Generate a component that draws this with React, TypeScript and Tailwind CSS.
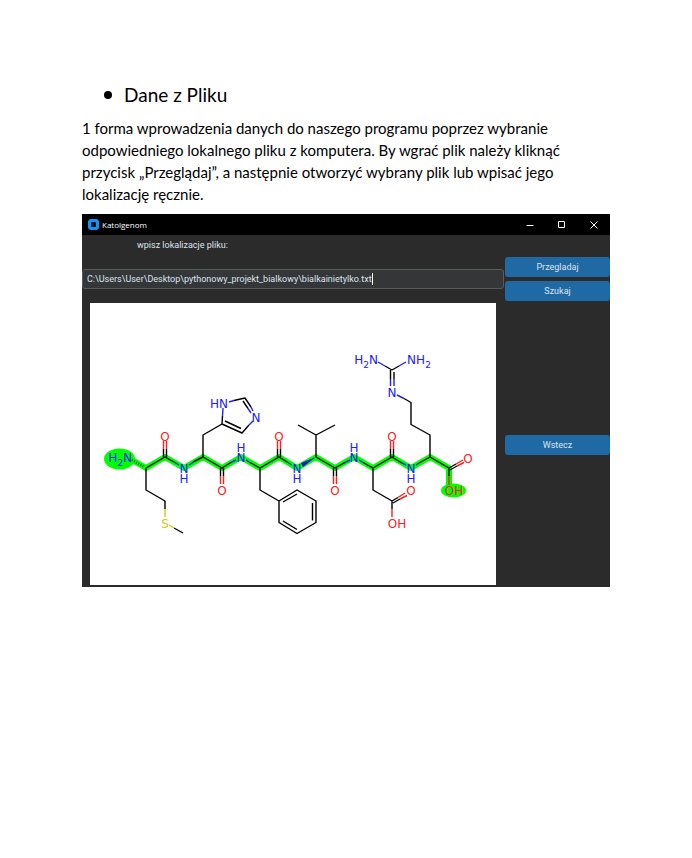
import { useState } from 'react';

type Point = [number, number];

const CARBON = '#000000';
const NITROGEN = '#2020ff';
const OXYGEN = '#ff2020';
const SULFUR = '#cccc20';

const backbone: Point[] = [
  [127, 457], [146, 468], [165, 457], [184, 468], [203, 457], [222, 468],
  [241, 457], [260, 468], [279, 457], [297, 468], [316, 457], [335, 468],
  [354, 457], [373, 468], [392, 457], [411, 468], [430, 457], [449, 468], [449, 490],
];

const bonds: { color: string; d: string }[] = [
  {
    color: CARBON,
    d: [
      'M146 468L165 457L174 462M193 462L203 457L222 468L231 462.5',
      'M250 462.5L260 468L279 457L288 462.5M316 457L335 468L345 462.5',
      'M363 462.5L373 468L392 457L401 462.5M420 462.5L430 457L449 468L456 464M450 470L457 466',
      'M146 468V490L165 501V509M174 528L183 533',
      'M203 457V435L222 424L242 433L249 425M225 421L241 428.5M222 424L222.5 416M234 400.5L245 398L251 407M243 401L248 408.5',
      'M260 468V490L279 501L297 490L316 501V522.5L297 533.5L279 522.5V501M283 502L297 494M312.5 503V520.5M297 529.5L283 521',
      'M316 457V435L298 425M316 435L335 425',
      'M373 468V490L392 501L398 497.5M393 503L400 499M392 501V509',
      'M430 457V435L411 424.5V402.5L404 398.5M392 370L385 366M392 370L399 366M390.5 370V379M394 372V379',
      'M163.5 457V449M166.5 457V449M220.5 468V476M223.5 468V476M277.5 457V449M280.5 457V449',
      'M333.5 468V476M336.5 468V476M390.5 457V449M393.5 457V449M449 468V476',
    ].join(''),
  },
  {
    color: NITROGEN,
    d: 'M174 462L179 465M189 465L193 462.5M231 462.5L236 460M246 460L250 462.5M288 462.5L292 465M345 462.5L350 460M359 460L363 462.5M401 462.5L406 465M416 465L420 462.5M222.5 416L223 408M229 402L234 400.5M251 407L253 411M248 408.5L251 413M249 425L253 421M404 398.5L397 395M385 366L378 362M399 366L406 362M390.5 379V386M394 379V386',
  },
  {
    color: OXYGEN,
    d: 'M163.5 449V441M166.5 449V441M220.5 476V484M223.5 476V484M277.5 449V441M280.5 449V441M333.5 476V484M336.5 476V484M390.5 449V441M393.5 449V441M449 476V485M456 464L463 460M457 466L464 462.5M398 497.5L405 493M400 499L407 495.5M392 509V517',
  },
  { color: SULFUR, d: 'M165 509V517M169 525L174 528' },
];

// "hydrogen" is the vertical distance from the atom to the H drawn above or below it.
const atoms: { text: string; x: number; y: number; color: string; hydrogen?: number }[] = [
  { text: 'O', x: 165, y: 436, color: OXYGEN },
  { text: 'N', x: 184, y: 468, color: NITROGEN, hydrogen: 10 },
  { text: 'O', x: 222, y: 490, color: OXYGEN },
  { text: 'HN', x: 219, y: 403, color: NITROGEN },
  { text: 'N', x: 256, y: 417, color: NITROGEN },
  { text: 'N', x: 241, y: 457, color: NITROGEN, hydrogen: -10 },
  { text: 'O', x: 279, y: 436, color: OXYGEN },
  { text: 'N', x: 297, y: 468, color: NITROGEN, hydrogen: 10 },
  { text: 'O', x: 335, y: 490, color: OXYGEN },
  { text: 'N', x: 354, y: 457, color: NITROGEN, hydrogen: -10 },
  { text: 'O', x: 392, y: 436, color: OXYGEN },
  { text: 'N', x: 411, y: 468, color: NITROGEN, hydrogen: 10 },
  { text: 'O', x: 468, y: 458, color: OXYGEN },
  { text: 'OH', x: 454, y: 490, color: OXYGEN },
  { text: 'O', x: 411, y: 490, color: OXYGEN },
  { text: 'OH', x: 397, y: 523, color: OXYGEN },
  { text: 'S', x: 165, y: 523, color: SULFUR },
  { text: 'N', x: 392, y: 392, color: NITROGEN },
  { text: 'NH', x: 416, y: 359, color: NITROGEN },
];

const aminos: Point[] = [[120, 457], [366, 359]];

function Molecule() {
  return (
    <svg
      viewBox="90 303 406 282"
      className="block w-full bg-white font-['DejaVu_Sans',sans-serif]"
      role="img"
      aria-label="Peptyd"
    >
      <ellipse cx="119.5" cy="459" rx="15.5" ry="10.5" fill="#00ff00" />
      <ellipse cx="453.5" cy="490.5" rx="12.5" ry="7" fill="#00ff00" />
      <polyline
        points={backbone.map((p) => p.join(',')).join(' ')}
        fill="none"
        stroke="#00ff00"
        strokeWidth="6"
        strokeLinecap="round"
        strokeLinejoin="round"
      />
      {bonds.map((b) => (
        <path key={b.color} d={b.d} fill="none" stroke={b.color} strokeWidth="1.4" strokeLinejoin="round" />
      ))}
      <path d="M132 460L144 467" stroke="#104f46" strokeWidth="2.4" strokeDasharray="0.9 1.5" />
      <path d="M316 457L301 463L303 467Z" fill="#1818d0" />
      {atoms.map((a) => (
        <text key={`${a.x}-${a.y}`} x={a.x} y={a.y + 5} fill={a.color} fontSize="12" textAnchor="middle">
          {a.text}
          {a.hydrogen && (
            <tspan x={a.x} dy={a.hydrogen}>
              H
            </tspan>
          )}
        </text>
      ))}
      {aminos.map(([x, y]) => (
        <text key={x} x={x} y={y + 5} fill={NITROGEN} fontSize="12" textAnchor="middle">
          H<tspan dy="4" fontSize="9">2</tspan><tspan dy="-4">N</tspan>
        </text>
      ))}
      <text x="428" y="368" fill={NITROGEN} fontSize="9" textAnchor="middle">
        2
      </text>
    </svg>
  );
}

const actionClass = 'block h-5 w-full rounded-[3px] bg-[#1f6aa5] text-[9px] leading-5 text-[#dce4ee]';

export default function App() {
  const [path, setPath] = useState('C:\\Users\\User\\Desktop\\pythonowy_projekt_bialkowy\\bialkainietylko.txt');

  return (
    <main className="min-h-screen bg-white px-[82px] pt-[81px] text-black">
      <ul className="list-none font-[Lato,sans-serif] text-[19px] leading-7">
        <li className="flex items-center gap-3 pl-[22px]">
          <span className="size-2 rounded-full bg-black" />
          <h1>Dane z Pliku</h1>
        </li>
      </ul>
      <p className="mt-2 font-[Lato,sans-serif] text-[15px] leading-[22px]">
        1 forma wprowadzenia danych do naszego programu poprzez wybranie
        <br />
        odpowiedniego lokalnego pliku z komputera. By wgrać plik należy kliknąć
        <br />
        przycisk „Przeglądaj”, a następnie otworzyć wybrany plik lub wpisać jego
        <br />
        lokalizację ręcznie.
      </p>

      <section className="mt-[9px] bg-[#2b2b2b] font-[Roboto,sans-serif] text-[9px] text-[#dce4ee]">
        <header className="flex h-[21px] items-center bg-black pl-[6px] pr-3 text-white">
          <svg viewBox="0 0 11 11" className="size-[11px]" aria-hidden="true">
            <path d="M2 0H9L11 2V9L9 11H2L0 9V2Z" fill="#0d94f5" />
            <rect x="3" y="3" width="5" height="5" rx="1" fill="#06121f" />
          </svg>
          <h2 className="ml-[3px] flex-1 font-['Open_Sans',sans-serif] text-[8px]">Katolgenom</h2>
          <div className="flex items-center gap-6">
            <button type="button" aria-label="Minimalizuj">
              <svg viewBox="0 0 8 8" className="size-2"><path d="M0.5 4.5H7.5" stroke="white" /></svg>
            </button>
            <button type="button" aria-label="Maksymalizuj">
              <svg viewBox="0 0 8 8" className="size-2"><path d="M0.5 0.5H6.5V6.5H0.5Z" fill="none" stroke="white" /></svg>
            </button>
            <button type="button" aria-label="Zamknij">
              <svg viewBox="0 0 8 8" className="size-2"><path d="M0.5 0.5L7.5 7.5M7.5 0.5L0.5 7.5" stroke="white" /></svg>
            </button>
          </div>
        </header>

        <div className="flex gap-px pb-0.5">
          <div className="min-w-0 flex-1">
            <label htmlFor="path" className="block pl-[55px] pt-0.5 leading-4">
              wpisz lokalizacje pliku:
            </label>
            <div className="mt-4 flex h-5 items-center rounded-[3px] border border-[#565b5e] bg-[#343638] px-1">
              <input
                id="path"
                value={path}
                onChange={(e) => setPath(e.target.value)}
                className="field-sizing-content max-w-full bg-transparent text-[9px] leading-4 outline-none"
              />
              <span className="h-3 w-px bg-white" />
            </div>
            <div className="mx-2 mt-3.5">
              <Molecule />
            </div>
          </div>
          <div className="w-[105px] pt-[22px]">
            <button type="button" className={actionClass}>Przegladaj</button>
            <div className="mt-1">
              <button type="button" className={actionClass}>Szukaj</button>
            </div>
            <div className="mt-[134px]">
              <button type="button" className={actionClass}>Wstecz</button>
            </div>
          </div>
        </div>
      </section>
    </main>
  );
}
